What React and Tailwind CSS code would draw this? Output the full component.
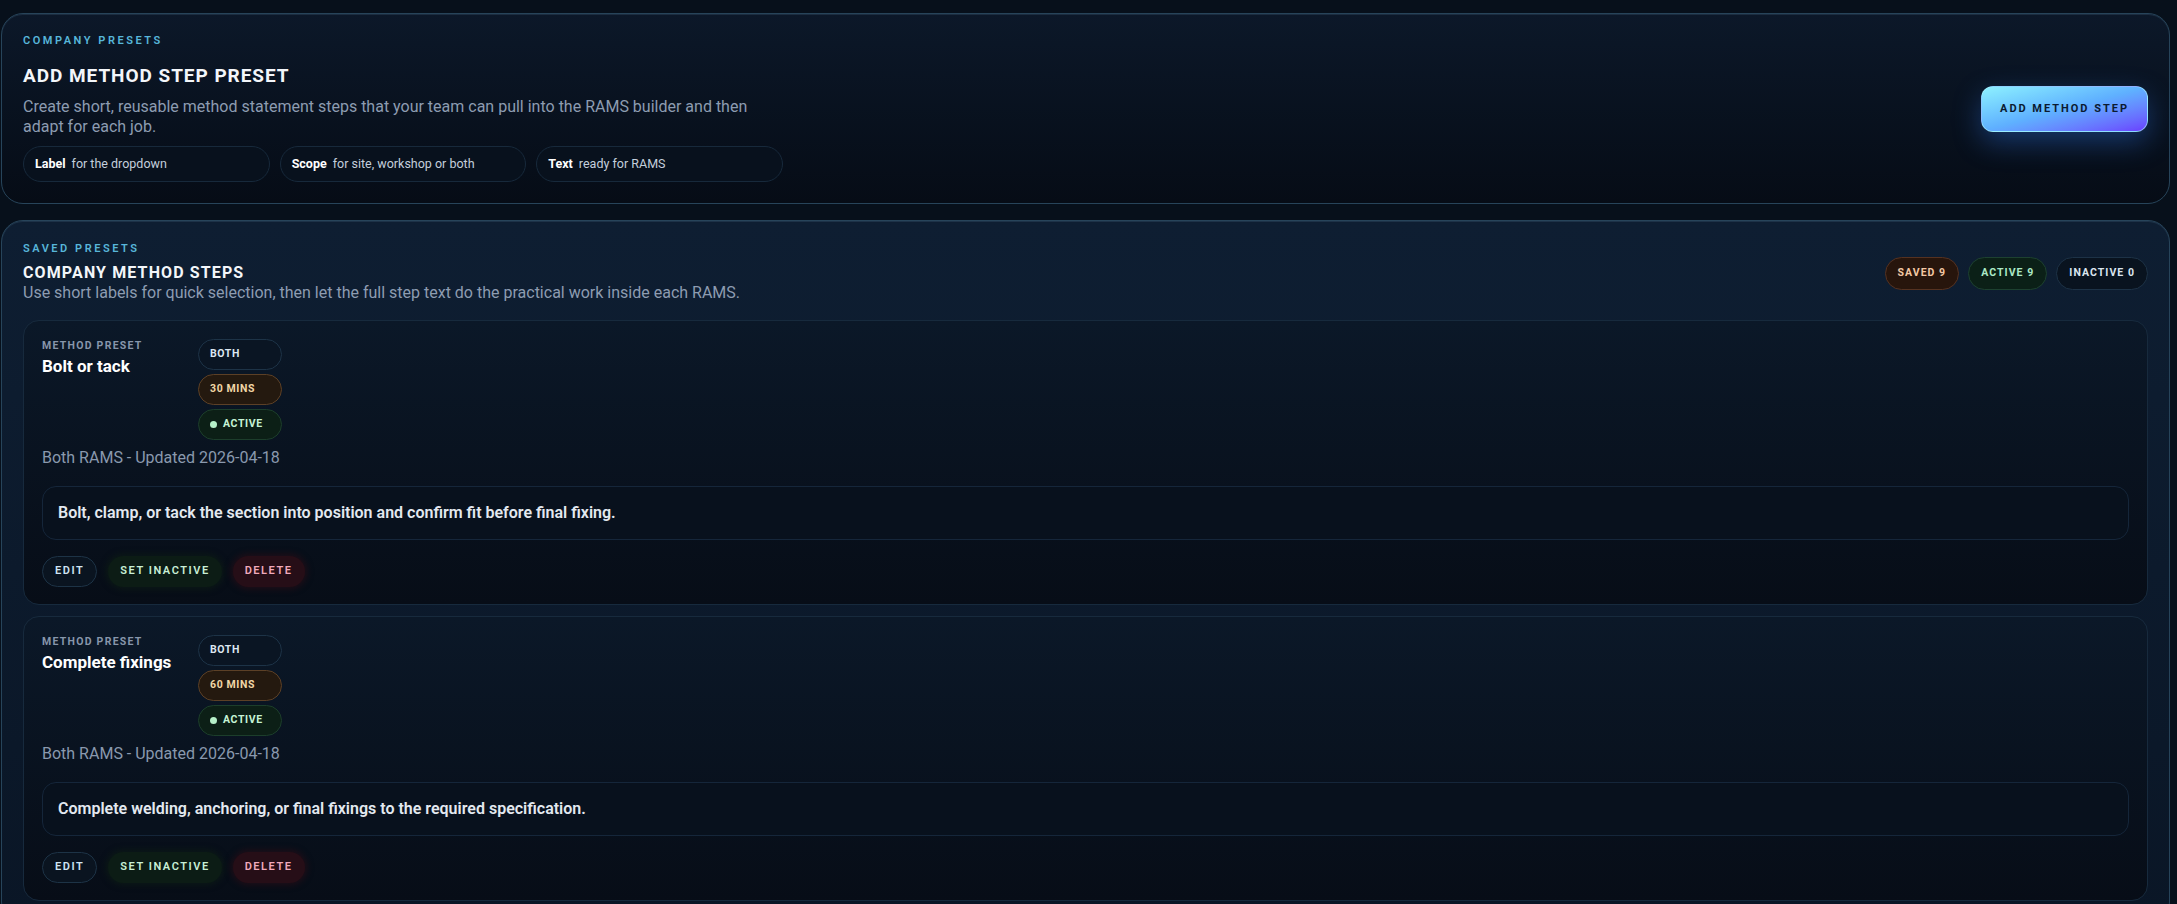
import React from "react";

const presets = [
  {
    id: 1,
    label: "Bolt or tack",
    scope: "Both",
    minutes: 30,
    active: true,
    updated: "2026-04-18",
    text: "Bolt, clamp, or tack the section into position and confirm fit before final fixing.",
  },
  {
    id: 2,
    label: "Complete fixings",
    scope: "Both",
    minutes: 60,
    active: true,
    updated: "2026-04-18",
    text: "Complete welding, anchoring, or final fixings to the required specification.",
  },
];

const hints = [
  { key: "Label", text: "for the dropdown" },
  { key: "Scope", text: "for site, workshop or both" },
  { key: "Text", text: "ready for RAMS" },
];

const Eyebrow = ({ children }) => (
  <p className="text-[11px] leading-[16px] font-semibold tracking-[0.23em] text-[#58b6da] uppercase">
    {children}
  </p>
);

const PresetCard = ({ preset }) => (
  <div className="rounded-[16px] border border-[#172a3d] bg-gradient-to-b from-[#0b1828] to-[#070d17] px-[18px] pt-[18px] pb-[17px]">
    <div className="flex gap-[16px]">
      <div className="w-[140px]">
        <p className="text-[10.5px] leading-[14px] font-bold tracking-[0.12em] text-[#8796ab] uppercase">
          Method preset
        </p>
        <h3 className="mt-[2px] text-[17px] leading-[22px] font-bold text-white">
          {preset.label}
        </h3>
      </div>
      <div className="flex w-[84px] flex-col gap-[4px]">
        <span className="flex h-[31px] items-center rounded-full border border-[#1d3347] bg-[#0a1523] px-[11px] text-[10.5px] font-bold tracking-[0.06em] text-[#dde7f1] uppercase">
          {preset.scope}
        </span>
        <span className="flex h-[31px] items-center rounded-full border border-[#5c4026] bg-[#24190f] px-[11px] text-[10.5px] font-bold tracking-[0.06em] text-[#f1d6a6] uppercase">
          {preset.minutes} mins
        </span>
        <span className="flex h-[31px] items-center gap-[6px] rounded-full border border-[#1c3e2b] bg-[#0c1f16] px-[11px] text-[10.5px] font-bold tracking-[0.06em] text-[#c6f3d5] uppercase">
          <span className="h-[7px] w-[7px] rounded-full bg-[#b6f0c9]" />
          {preset.active ? "Active" : "Inactive"}
        </span>
      </div>
    </div>

    <p className="mt-[8px] text-[16px] leading-[20px] text-[#8a99ae]">
      {preset.scope} RAMS - Updated {preset.updated}
    </p>

    <div className="mt-[18px] rounded-[14px] border border-[#15263a] bg-[#08111d] px-[15px] py-[16px] text-[16px] leading-[20px] font-semibold text-[#e3e9f0]">
      {preset.text}
    </div>

    <div className="mt-[16px] flex gap-[11px]">
      <button className="h-[31px] rounded-full border border-[#1d3346] bg-[#0a1420] px-[12px] text-[11px] font-semibold tracking-[0.14em] text-[#cfe4f3]">
        EDIT
      </button>
      <button className="h-[31px] rounded-full bg-[#0c1c15] px-[12px] text-[11px] font-semibold tracking-[0.14em] text-[#c9efd6] shadow-[0_0_6px_2px_rgba(12,28,21,0.8)]">
        SET INACTIVE
      </button>
      <button className="h-[31px] rounded-full bg-[#260e17] px-[12px] text-[11px] font-semibold tracking-[0.14em] text-[#f0a9bb] shadow-[0_0_6px_2px_rgba(38,14,23,0.8)]">
        DELETE
      </button>
    </div>
  </div>
);

export default function App() {
  return (
    <div className="min-h-screen bg-[#07101b] pt-[13px] pr-[7px] pl-px font-['Roboto','Liberation_Sans',sans-serif]">
      <section className="flex items-center justify-between rounded-[22px] border border-[#27445a] bg-gradient-to-b from-[#0c1829] to-[#060c16] px-[21px] pt-[19px] pb-[21px] shadow-[inset_0_1px_0_rgba(120,170,200,0.15)]">
        <div className="w-[760px]">
          <Eyebrow>Company presets</Eyebrow>
          <h1 className="mt-[15px] text-[19px] leading-[24px] font-bold tracking-[0.05em] text-[#f3f6fa] uppercase">
            Add method step preset
          </h1>
          <p className="mt-[9px] text-[16px] leading-[19.5px] text-[#8d9cb1]">
            Create short, reusable method statement steps that your team can pull into the RAMS builder and then
            adapt for each job.
          </p>
          <div className="mt-[10px] grid grid-cols-3 gap-[10px]">
            {hints.map((h) => (
              <div
                key={h.key}
                className="flex h-[36px] items-center gap-[6px] rounded-full border border-[#17293b] bg-[#08111d] px-[11px] text-[12.5px]"
              >
                <span className="font-bold text-white">{h.key}</span>
                <span className="text-[#c4cfdc]">{h.text}</span>
              </div>
            ))}
          </div>
        </div>
        <button className="mt-[3px] h-[46px] rounded-[12px] border border-[#a9f2ff]/60 bg-gradient-to-br from-[#8ef1ff] via-[#5fb0ff] to-[#6a3dff] px-[18px] text-[11px] font-bold tracking-[0.18em] text-[#0b1a30] shadow-[0_10px_28px_rgba(52,130,255,0.35)]">
          ADD METHOD STEP
        </button>
      </section>

      <section className="mt-[16px] rounded-[22px] border border-[#27445a] bg-gradient-to-b from-[#0e1e32] to-[#0a1626] px-[21px] pt-[20px] pb-[22px] shadow-[inset_0_1px_0_rgba(120,170,200,0.15)]">
        <div className="flex items-center justify-between">
          <div>
            <Eyebrow>Saved presets</Eyebrow>
            <h2 className="mt-[6px] text-[16px] leading-[20px] font-bold tracking-[0.07em] text-[#f3f6fa] uppercase">
              Company method steps
            </h2>
            <p className="text-[16px] leading-[19.5px] text-[#8d9cb1]">
              Use short labels for quick selection, then let the full step text do the practical work inside each RAMS.
            </p>
          </div>
          <div className="mt-[3px] flex gap-[9px]">
            <span className="flex h-[33px] items-center rounded-full border border-[#553221] bg-[#27150c] px-[12px] text-[10.5px] font-bold tracking-[0.1em] text-[#f3c8a4]">
              SAVED 9
            </span>
            <span className="flex h-[33px] items-center rounded-full border border-[#1d4130] bg-[#0b2017] px-[12px] text-[10.5px] font-bold tracking-[0.1em] text-[#ace9c6]">
              ACTIVE 9
            </span>
            <span className="flex h-[33px] items-center rounded-full border border-[#1d3246] bg-[#09131f] px-[12px] text-[10.5px] font-bold tracking-[0.1em] text-[#dbe5ef]">
              INACTIVE 0
            </span>
          </div>
        </div>

        <div className="mt-[17px] flex flex-col gap-[11px]">
          {presets.map((p) => (
            <PresetCard key={p.id} preset={p} />
          ))}
        </div>
      </section>
    </div>
  );
}
